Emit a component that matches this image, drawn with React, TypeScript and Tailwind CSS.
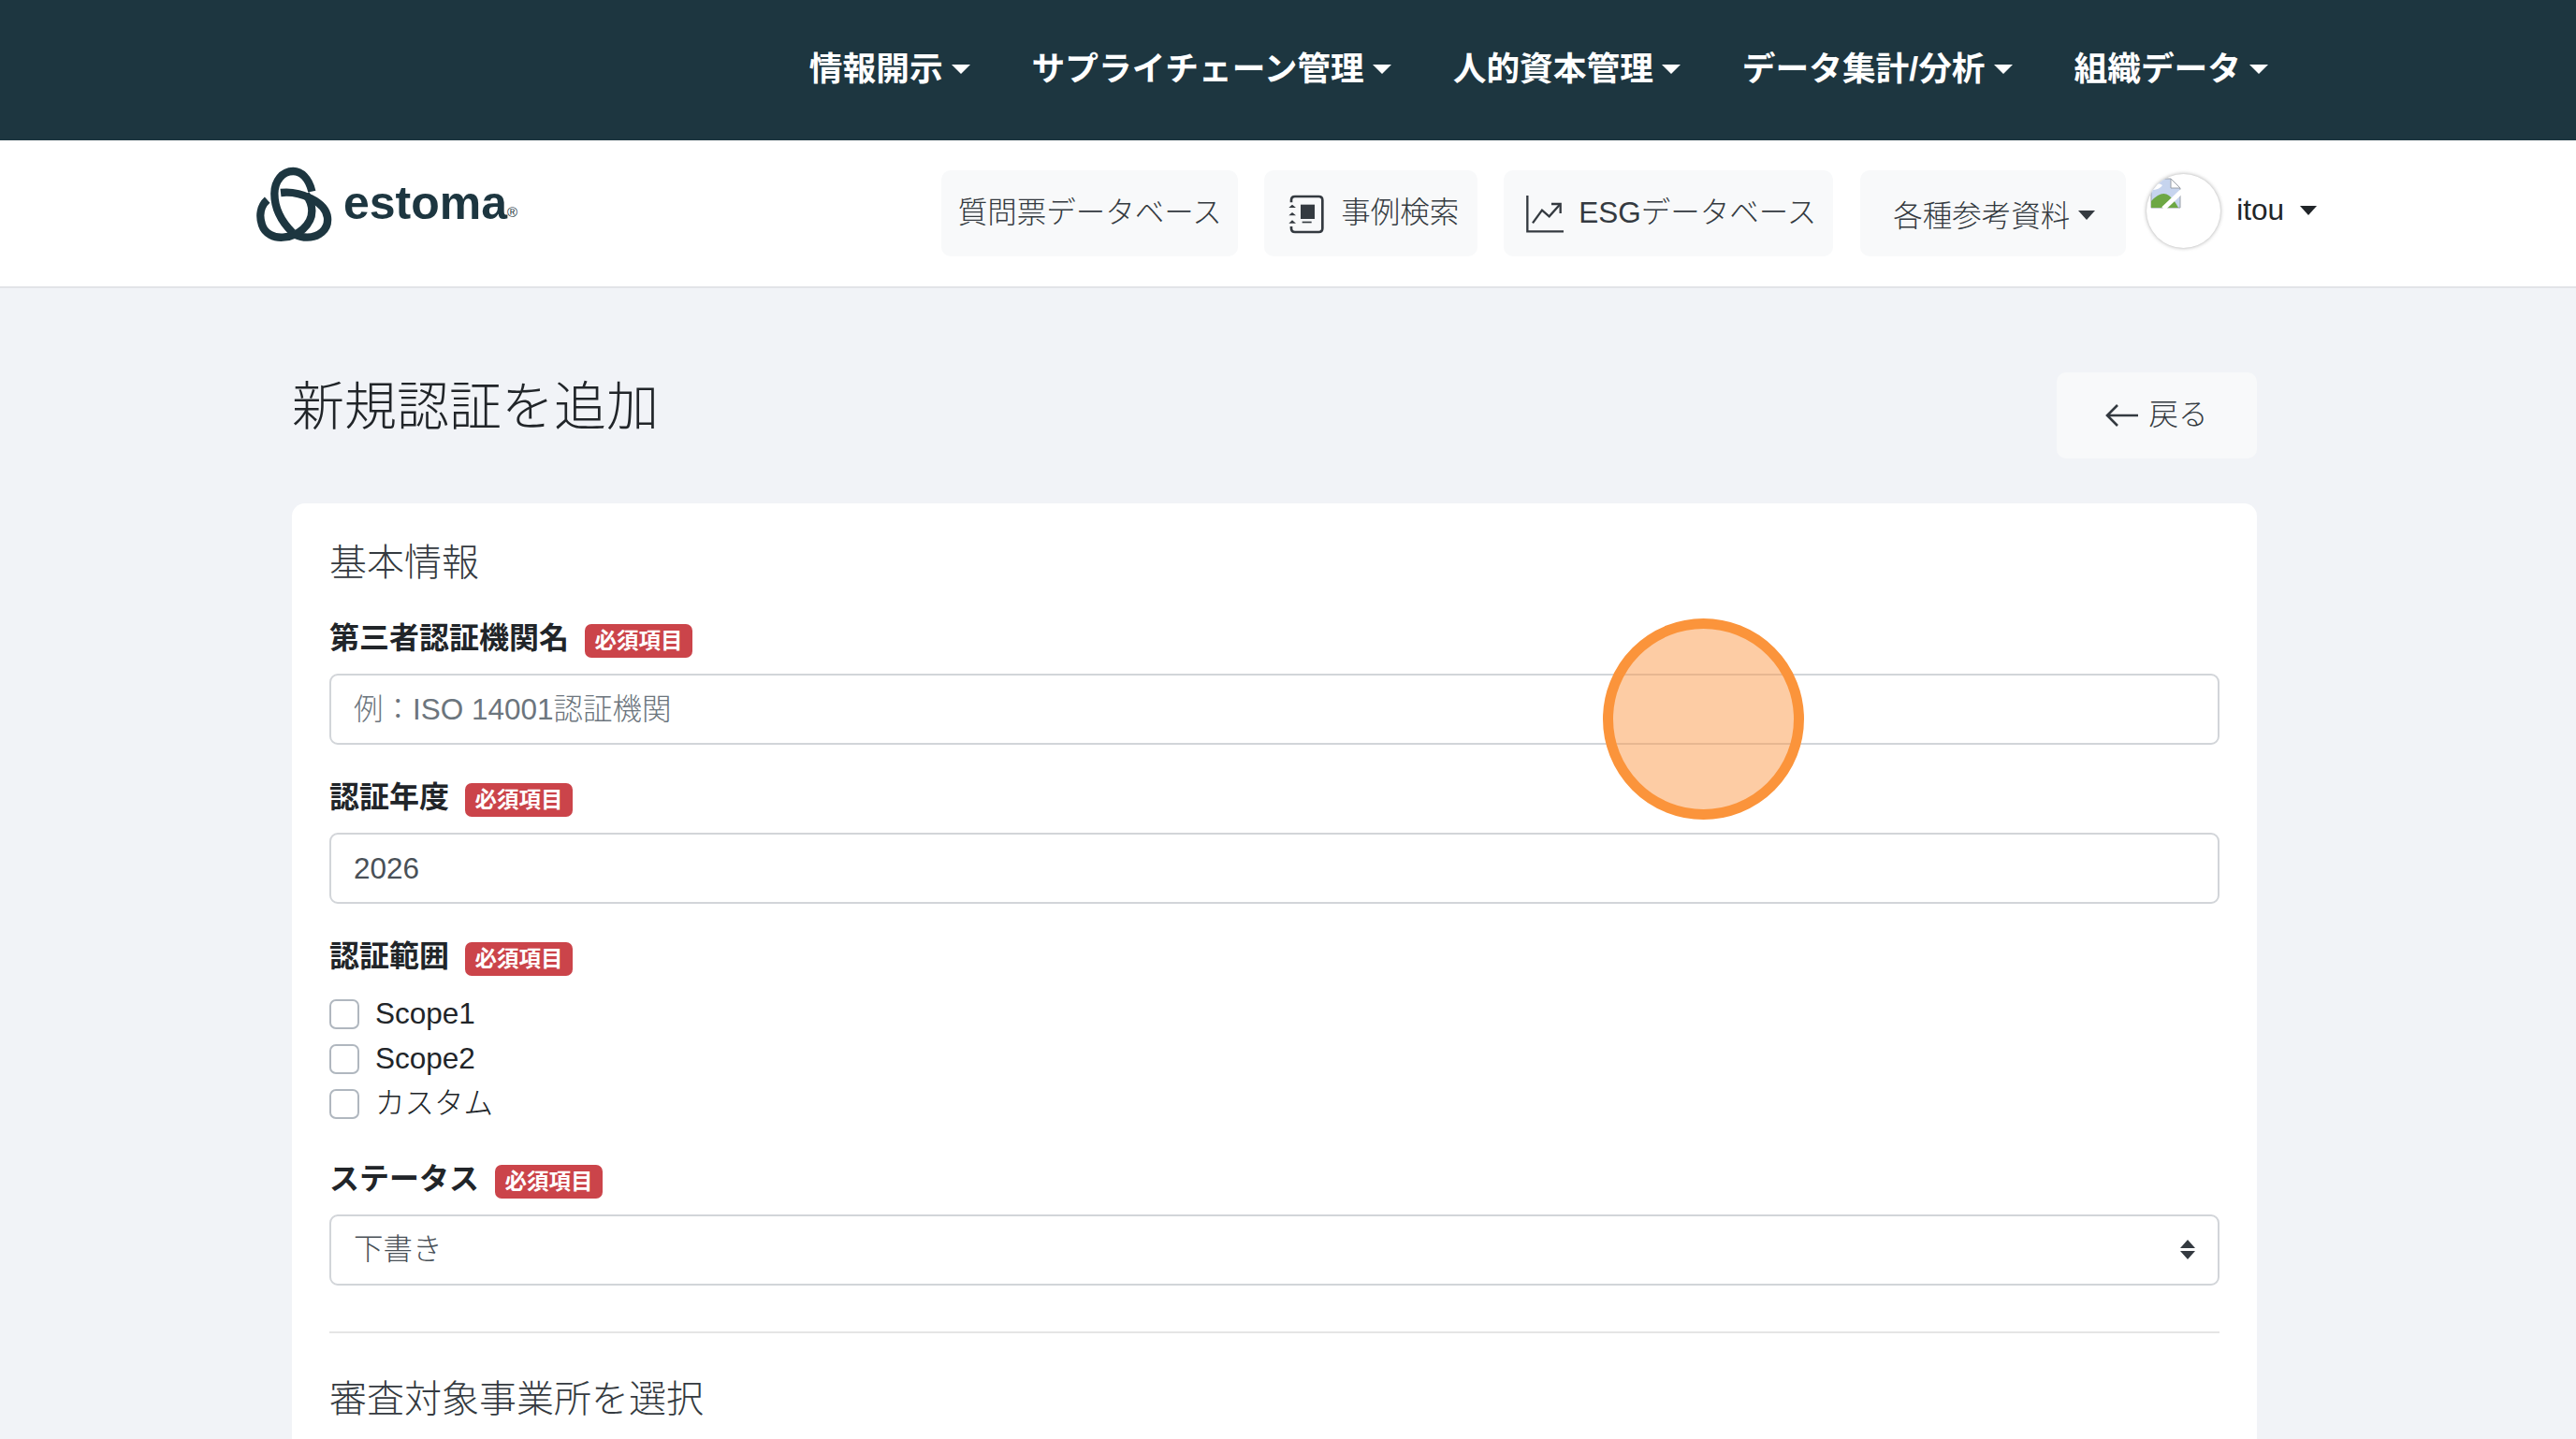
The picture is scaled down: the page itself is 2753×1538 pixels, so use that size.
import React from "react";

const Caret = ({ cls }: { cls: string }) => (
  <span className={`inline-block w-0 h-0 border-x-transparent ${cls}`} />
);

const Logo = () => (
  <svg width="100" height="90" viewBox="0 0 300 270" className="block -ml-[10px] -mt-[12px] -mb-[4px] shrink-0" fill="none" stroke="#1d3640" strokeWidth="25">
    <path d="M205 98C195 55 170 33 145 33C110 33 85 65 85 105C85 150 108 195 143 230" />
    <path d="M105 102C165 95 250 130 255 182C259 222 225 245 190 245C175 245 165 243 153 237" />
    <path d="M62 125C40 145 35 175 45 205C55 235 85 247 112 245C160 243 205 205 205 160C205 140 197 122 186 107" />
  </svg>
);

const NotebookIcon = () => (
  <svg width="60" height="60" viewBox="0 0 180 180" className="block -m-[10px] shrink-0" fill="none" stroke="#343a40">
    <path d="M30 55V48Q30 36 42 36H118Q130 36 130 48V138Q130 150 118 150H42Q30 150 30 138V132" strokeWidth="8" />
    <rect x="60" y="62" width="45" height="46" fill="#343a40" stroke="none" />
    <rect x="65" y="116" width="30" height="5" fill="#343a40" stroke="none" />
    <path d="M22 72H45L33 62ZM22 97H45L33 87ZM22 122H45L33 112Z" fill="#343a40" stroke="none" />
  </svg>
);

const ChartIcon = () => (
  <svg width="60" height="60" viewBox="0 0 180 180" className="block -m-[10px] shrink-0" fill="none" stroke="#343a40" strokeWidth="7">
    <path d="M25 33V148H141" />
    <path d="M42 121L72 80L95 100L128 63" />
    <path d="M102 60H131V90" />
  </svg>
);

const BrokenImage = () => (
  <svg width="33" height="33" viewBox="0 0 33 33" className="block shrink-0">
    <path d="M1 1H22L32 11V32H1Z" fill="#c6d4ee" stroke="#9aa0a8" strokeWidth="1" />
    <path d="M22 1V11H32Z" fill="#fff" stroke="#9aa0a8" strokeWidth="1" />
    <path d="M1 12Q7 3 13 8Q10 13 1 13Z" fill="#fff" />
    <path d="M1 32V25Q12 13 20 19Q26 24 30 32Z" fill="#6da744" />
    <path d="M14 33L34 14" stroke="#fff" strokeWidth="5" />
  </svg>
);

const NavItem = ({ label }: { label: string }) => (
  <div className="flex items-center gap-[9px]">
    <span className="text-[35.7px] leading-[42px] font-bold text-white">{label}</span>
    <Caret cls="border-x-[10px] border-t-[10px] border-t-white" />
  </div>
);

const SubButton = ({ children, cls }: { children: React.ReactNode; cls: string }) => (
  <div className={`h-[92px] flex items-center rounded-[10px] bg-[#f8f9fa] text-[#343a40] text-[31.5px] font-light ${cls}`}>
    {children}
  </div>
);

const Label = ({ label, cls }: { label: string; cls?: string }) => (
  <div className={`flex items-center gap-[17px] h-[36px] ${cls ?? ""}`}>
    <span className="text-[32px] leading-[36px] font-bold text-[#212529] -mt-[6px]">{label}</span>
    <span className="h-[36px] w-[115px] rounded-[7px] bg-[#cb444a] text-white text-[23.5px] leading-[36px] font-bold text-center">
      必須項目
    </span>
  </div>
);

const Check = ({ label }: { label: string }) => (
  <label className="flex items-center h-[48px] gap-[17px] text-[31.5px] text-[#212529] font-light">
    <input type="checkbox" className="appearance-none w-[32px] h-[32px] bg-white border-2 border-[#b0b7bf] rounded-[7px]" />
    <span>{label}</span>
  </label>
);

const inputCls =
  "block w-full h-[76px] px-[24px] bg-white border-2 border-[#d2d5d9] rounded-[9px] text-[31.5px] text-[#495057] font-light placeholder:text-[#6c757d] outline-none";

export default function App() {
  return (
    <div className="relative h-[1538px] overflow-hidden bg-[#f1f3f7] font-['Liberation_Sans','Noto_Sans_CJK_JP',sans-serif]">
      <div className="h-[150px] bg-[#1d3640] flex items-center justify-end gap-[66px] pr-[329px] pb-[3px]">
        <NavItem label="情報開示" />
        <NavItem label="サプライチェーン管理" />
        <NavItem label="人的資本管理" />
        <NavItem label="データ集計/分析" />
        <NavItem label="組織データ" />
      </div>

      <div className="h-[158px] bg-white border-b-2 border-[#e2e4e8] flex items-center pl-[275px] pr-[277px]">
        <div className="flex items-center -mt-[14px]">
          <Logo />
          <span className="ml-[2px] -mt-[8px] text-[50px] leading-[60px] font-bold text-[#1d3640]">estoma</span>
          <span className="mt-[12px] text-[15px] leading-[16px] text-[#1d3640]">®</span>
        </div>
        <div className="ml-auto flex items-center">
          <SubButton cls="w-[317px] justify-center">質問票データベース</SubButton>
          <SubButton cls="ml-[28px] w-[228px] pl-[29px] gap-[11px]">
            <NotebookIcon />
            <span className="ml-[2px]">事例検索</span>
          </SubButton>
          <SubButton cls="ml-[28px] w-[352px] pl-[27px] gap-[11px]">
            <ChartIcon />
            <span className="ml-[2px]">ESGデータベース</span>
          </SubButton>
          <SubButton cls="ml-[29px] w-[284px] pl-[35px] gap-[9px]">
            <span className="mt-[8px]">各種参考資料</span>
            <Caret cls="border-x-[9px] border-t-[10px] border-t-[#343a40] mt-[4px]" />
          </SubButton>
          <div className="ml-[22px] w-[79px] h-[79px] rounded-full bg-white shadow-[0_0_4px_rgba(0,0,0,0.35)] overflow-hidden pl-[4px] pt-[4px] -mt-[6px]">
            <BrokenImage />
          </div>
          <span className="ml-[17px] text-[31.5px] text-[#212529] -mt-[6px]">itou</span>
          <Caret cls="ml-[17px] border-x-[9px] border-t-[10px] border-t-[#212529] -mt-[6px]" />
        </div>
      </div>

      <div className="w-[2100px] ml-[312px] pt-[90px]">
        <div className="flex justify-between items-start">
          <h1 className="mt-[1px] text-[56px] leading-[72px] font-light text-[#212529]">新規認証を追加</h1>
          <div className="w-[214px] h-[92px] rounded-[10px] bg-[#f8f9fa] flex items-center justify-center gap-[10px] text-[31.5px] font-light text-[#343a40]">
            <svg width="36" height="30" viewBox="0 0 36 30" fill="none" stroke="#343a40" strokeWidth="2.6" className="block">
              <path d="M35 15H2M13 4L2 15L13 26" />
            </svg>
            <span>戻る</span>
          </div>
        </div>

        <div className="mt-[48px] bg-white rounded-[14px] px-[40px] pt-[39px] h-[1100px]">
          <h2 className="text-[40px] leading-[48px] font-light text-[#343a40]">基本情報</h2>

          <Label label="第三者認証機関名" cls="mt-[42px] mb-[17px]" />
          <input className={inputCls} placeholder="例：ISO 14001認証機関" />

          <Label label="認証年度" cls="mt-[41px] mb-[17px]" />
          <input className={inputCls} defaultValue="2026" />

          <Label label="認証範囲" cls="mt-[41px] mb-[17px]" />
          <div>
            <Check label="Scope1" />
            <Check label="Scope2" />
            <Check label="カスタム" />
          </div>

          <Label label="ステータス" cls="mt-[41px] mb-[17px]" />
          <div className="relative">
            <select className={`${inputCls} appearance-none`} defaultValue="下書き">
              <option>下書き</option>
            </select>
            <svg width="16" height="22" viewBox="0 0 16 22" className="absolute right-[26px] top-[27px]" fill="#343a40">
              <path d="M8 0L16 9H0ZM8 21L0 12H16Z" />
            </svg>
          </div>

          <div className="mt-[49px] h-[2px] bg-[#e5e5e5]" />
          <h2 className="mt-[46px] text-[40px] leading-[48px] font-light text-[#343a40]">審査対象事業所を選択</h2>
        </div>
      </div>

      <div className="absolute left-[1713px] top-[661px] w-[215px] h-[215px] rounded-full border-[11px] border-[#fb943b] bg-[#fc9a4a]/50" />
    </div>
  );
}
